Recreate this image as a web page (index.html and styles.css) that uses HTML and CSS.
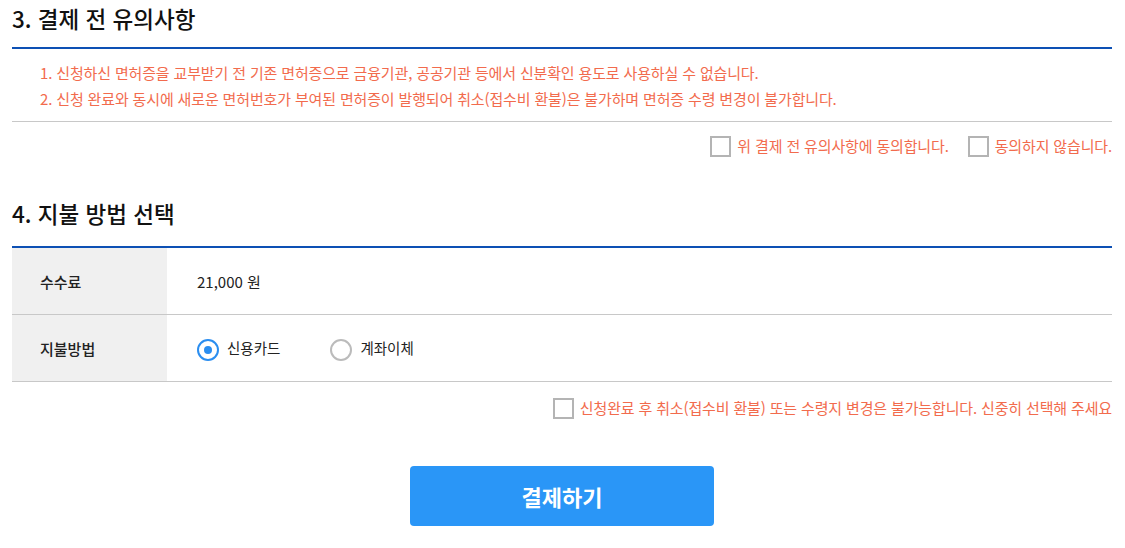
FILE: index.html
```html
<!DOCTYPE html>
<html lang="ko">
<head>
    <meta charset="UTF-8">
    <meta name="viewport" content="width=device-width, initial-scale=1.0">
    <title>결제</title>
    <link rel="stylesheet" href="styles.css">
</head>
<body>

    <div class="container">
        <h2 class="sec-title">3. 결제 전 유의사항</h2>
        <ol class="notes">
            <li>1. 신청하신 면허증을 교부받기 전 기존 면허증으로 금융기관, 공공기관 등에서 신분확인 용도로 사용하실 수 없습니다.</li>
            <li>2. 신청 완료와 동시에 새로운 면허번호가 부여된 면허증이 발행되어 취소(접수비 환불)은 불가하며 면허증 수령 변경이 불가합니다.</li>
        </ol>
        <div class="agree">
            <label class="chk"><span class="box"></span>위 결제 전 유의사항에 동의합니다.</label>
            <label class="chk"><span class="box"></span>동의하지 않습니다.</label>
        </div>

        <h2 class="sec-title sec-two">4. 지불 방법 선택</h2>
        <table class="pay">
            <tr>
                <th>수수료</th>
                <td>21,000 원</td>
            </tr>
            <tr>
                <th>지불방법</th>
                <td>
                    <div class="radios">
                        <label class="radio on"><span class="dot"></span>신용카드</label>
                        <label class="radio"><span class="dot"></span>계좌이체</label>
                    </div>
                </td>
            </tr>
        </table>
        <div class="agree agree-two">
            <label class="chk"><span class="box"></span>신청완료 후 취소(접수비 환불) 또는 수령지 변경은 불가능합니다. 신중히 선택해 주세요</label>
        </div>

        <div class="btn-wrap">
            <button class="btn-pay">결제하기</button>
        </div>
    </div>

</body>
</html>
```

FILE: styles.css
```css
body {
    font-family: "Noto Sans CJK KR", "Noto Sans", sans-serif;
    background-color: #fff;
    margin: 0;
    color: #222;
}
.container {
    width: 1100px;
    margin-left: 12px;
}
.sec-title {
    margin: 0;
    font-size: 22.5px;
    font-weight: 500;
    line-height: 36px;
    padding-bottom: 11px;
    border-bottom: 2px solid #0d50b4;
    color: #111;
}
.sec-two {
    margin-top: 25px;
    padding-bottom: 15px;
}
.notes {
    list-style: none;
    margin: 0;
    padding: 11px 0 9px 28px;
    border-bottom: 1px solid #c8c8c8;
}
.notes li {
    font-size: 15px;
    letter-spacing: -0.15px;
    line-height: 26px;
    color: #f26b4d;
}
.agree {
    display: flex;
    justify-content: flex-end;
    gap: 19px;
    padding: 13px 0;
}
.agree-two {
    padding: 15px 0;
}
.chk {
    display: flex;
    align-items: center;
    gap: 6px;
    font-size: 15px;
    letter-spacing: -0.15px;
    color: #f26b4d;
    line-height: 22px;
}
.chk .box {
    width: 17px;
    height: 17px;
    border: 2px solid #b4b4b4;
    background: #fff;
}
.pay {
    width: 100%;
    border-collapse: collapse;
}
.pay th, .pay td {
    height: 66px;
    border-bottom: 1px solid #c8c8c8;
    font-size: 15px;
    padding: 0;
}
.pay th {
    width: 127px;
    background: #f0f0f0;
    text-align: left;
    padding-left: 28px;
    font-weight: 500;
    color: #222;
}
.pay td {
    padding-left: 30px;
    color: #222;
}
.radios {
    display: flex;
    gap: 50px;
}
.radio {
    display: flex;
    align-items: center;
    gap: 8px;
    font-size: 14.5px;
    line-height: 22px;
}
.radio .dot {
    width: 18px;
    height: 18px;
    border: 2px solid #bbb;
    border-radius: 50%;
    position: relative;
    margin-top: 3px;
}
.radio.on .dot {
    border-color: #2b8ef0;
}
.radio.on .dot::after {
    content: "";
    position: absolute;
    left: 5px;
    top: 5px;
    width: 8px;
    height: 8px;
    border-radius: 50%;
    background: #2b8ef0;
}
.btn-wrap {
    text-align: center;
    padding-top: 32px;
}
.btn-pay {
    width: 304px;
    height: 60px;
    background: #2a96f7;
    color: white;
    border: none;
    border-radius: 4px;
    font-family: inherit;
    font-size: 22px;
    font-weight: bold;
    cursor: pointer;
}
```
